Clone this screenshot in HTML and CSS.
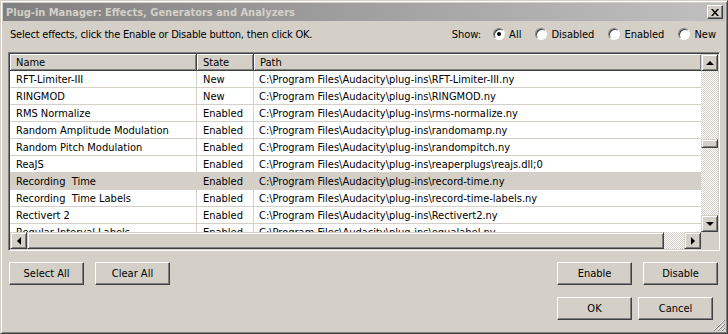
FILE: index.html
```html
<!DOCTYPE html>
<html lang="en">
  <head>
    <meta charset="UTF-8" />
    <title>Plug-in Manager</title>
    <link rel="stylesheet" href="styles.css">
  </head>
  <body>
    <div class="window">
      <div class="titlebar">
        <span class="title">Plug-in Manager: Effects, Generators and Analyzers</span>
        <div class="close">
          <svg width="8" height="7" viewBox="0 0 8 7"><path d="M0 0h2l2 2.5 2-2.5h2l-3 3.5 3 3.5h-2l-2-2.5-2 2.5h-2l3-3.5z" fill="#000"/></svg>
        </div>
      </div>

      <div class="content">
        <div class="topline">
          <span class="hint">Select effects, click the Enable or Disable button, then click OK.</span>
          <div class="show">
            <span class="show-label">Show:</span>
            <span class="opt"><span class="radio on"></span>All</span>
            <span class="opt"><span class="radio"></span>Disabled</span>
            <span class="opt"><span class="radio"></span>Enabled</span>
            <span class="opt"><span class="radio"></span>New</span>
          </div>
        </div>

        <div class="listbox">
          <div class="list">
            <div class="header">
              <div class="hcell name">Name</div>
              <div class="hcell state">State</div>
              <div class="hcell path">Path</div>
            </div>
            <div class="row"><div class="cell name">RFT-Limiter-III</div><div class="cell state">New</div><div class="cell path">C:\Program Files\Audacity\plug-ins\RFT-Limiter-III.ny</div></div>
            <div class="row"><div class="cell name">RINGMOD</div><div class="cell state">New</div><div class="cell path">C:\Program Files\Audacity\plug-ins\RINGMOD.ny</div></div>
            <div class="row"><div class="cell name">RMS Normalize</div><div class="cell state">Enabled</div><div class="cell path">C:\Program Files\Audacity\plug-ins\rms-normalize.ny</div></div>
            <div class="row"><div class="cell name">Random Amplitude Modulation</div><div class="cell state">Enabled</div><div class="cell path">C:\Program Files\Audacity\plug-ins\randomamp.ny</div></div>
            <div class="row"><div class="cell name">Random Pitch Modulation</div><div class="cell state">Enabled</div><div class="cell path">C:\Program Files\Audacity\plug-ins\randompitch.ny</div></div>
            <div class="row"><div class="cell name">ReaJS</div><div class="cell state">Enabled</div><div class="cell path">C:\Program Files\Audacity\plug-ins\reaperplugs\reajs.dll;0</div></div>
            <div class="row selected"><div class="cell name">Recording  Time</div><div class="cell state">Enabled</div><div class="cell path">C:\Program Files\Audacity\plug-ins\record-time.ny</div></div>
            <div class="row"><div class="cell name">Recording  Time Labels</div><div class="cell state">Enabled</div><div class="cell path">C:\Program Files\Audacity\plug-ins\record-time-labels.ny</div></div>
            <div class="row"><div class="cell name">Rectivert 2</div><div class="cell state">Enabled</div><div class="cell path">C:\Program Files\Audacity\plug-ins\Rectivert2.ny</div></div>
            <div class="row"><div class="cell name">Regular Interval Labels</div><div class="cell state">Enabled</div><div class="cell path">C:\Program Files\Audacity\plug-ins\equalabel.ny</div></div>
          </div>

          <!-- dikey kaydirma cubugu -->
          <div class="vscroll">
            <div class="sbtn"><span class="arrow up"></span></div>
            <div class="track">
              <div class="vthumb"></div>
            </div>
            <div class="sbtn"><span class="arrow down"></span></div>
          </div>

          <!-- yatay kaydirma cubugu -->
          <div class="hscroll">
            <div class="sbtn"><span class="arrow left"></span></div>
            <div class="hthumb"></div>
            <div class="track"></div>
            <div class="sbtn"><span class="arrow right"></span></div>
          </div>
          <div class="corner"></div>
        </div>

        <div class="btnrow first">
          <div class="group">
            <button class="btn">Select All</button>
            <button class="btn">Clear All</button>
          </div>
          <div class="group right1">
            <button class="btn">Enable</button>
            <button class="btn">Disable</button>
          </div>
        </div>
        <div class="btnrow second">
          <div class="group tight">
            <button class="btn">OK</button>
            <button class="btn">Cancel</button>
          </div>
        </div>
      </div>

      <svg class="grip" width="12" height="12" viewBox="0 0 12 12">
        <path d="M11 1L1 11M11 5L5 11M11 9L9 11" stroke="#fff" stroke-width="1"/>
        <path d="M12 1L1 12M12 5L5 12M12 9L9 12" stroke="#808080" stroke-width="1"/>
      </svg>
    </div>
  </body>
</html>
```

FILE: styles.css
```css
body {
  margin: 0;
  background-color: #d4d0c8;
  font-family: "DejaVu Sans Condensed", "Liberation Sans", sans-serif;
  font-size: 11px;
  color: #000000;
}

.window {
  position: relative;
  box-sizing: border-box;
  width: 728px;
  height: 334px;
  border: 1px solid;
  border-color: #d4d0c8 #404040 #404040 #d4d0c8;
  box-shadow: inset 1px 1px #ffffff, inset -1px -1px #808080;
  padding: 2px;
  background-color: #d4d0c8;
  display: flex;
  flex-direction: column;
}

/* Baslik cubugu (pasif pencere renkleri) */
.titlebar {
  height: 18px;
  display: flex;
  align-items: center;
  justify-content: space-between;
  padding: 0 2px 0 3px;
  background: linear-gradient(to right, #808080, #c0c0c0);
}
.title {
  color: #d4d0c8;
  font-weight: bold;
  font-size: 11px;
}
.close {
  box-sizing: border-box;
  width: 16px;
  height: 14px;
  display: flex;
  align-items: center;
  justify-content: center;
  background-color: #d4d0c8;
  border: 1px solid;
  border-color: #ffffff #404040 #404040 #ffffff;
  box-shadow: inset -1px -1px #808080;
}

.content {
  flex: 1;
  padding: 0 5px;
  display: flex;
  flex-direction: column;
}

.topline {
  height: 18px;
  margin-top: 4px;
  display: flex;
  align-items: center;
  justify-content: space-between;
  padding: 0 4px 0 2px;
}
.hint {
  letter-spacing: -0.2px;
}
.show {
  display: flex;
  align-items: center;
}
.show-label {
  margin-right: 12px;
}
.opt {
  display: flex;
  align-items: center;
  gap: 4px;
  margin-left: 14px;
}
.show-label + .opt {
  margin-left: 0;
}
.radio {
  position: relative;
  box-sizing: border-box;
  width: 12px;
  height: 12px;
  border-radius: 50%;
  background-color: #ffffff;
  border: 1px solid;
  border-color: #808080 #ffffff #ffffff #808080;
  box-shadow: inset 1px 1px #404040;
}
.radio.on::after {
  content: "";
  position: absolute;
  left: 3px;
  top: 3px;
  width: 4px;
  height: 4px;
  border-radius: 50%;
  background-color: #000000;
}

/* Liste kutusu */
.listbox {
  box-sizing: border-box;
  height: 199px;
  margin-top: 9px;
  border: 1px solid;
  border-color: #808080 #ffffff #ffffff #808080;
  box-shadow: inset 1px 1px #404040, inset -1px -1px #d4d0c8;
  padding: 1px;
  display: grid;
  grid-template-columns: 1fr 17px;
  grid-template-rows: 1fr 17px;
}
.list {
  background-color: #ffffff;
  overflow: hidden;
}
.header {
  display: flex;
  height: 17px;
}
.hcell {
  box-sizing: border-box;
  height: 17px;
  line-height: 16px;
  padding: 1px 0 0 6px;
  background-color: #d4d0c8;
  border-right: 1px solid #404040;
  border-bottom: 1px solid #404040;
  box-shadow: inset 1px 1px #ffffff, inset -1px -1px #808080;
  white-space: nowrap;
  overflow: hidden;
}
.name {
  width: 187px;
  flex: none;
}
.state {
  width: 57px;
  flex: none;
}
.path {
  flex: 1;
}
.header .path {
  border-right: none;
}
.row {
  display: flex;
  height: 17px;
}
.cell {
  box-sizing: border-box;
  height: 17px;
  line-height: 16px;
  padding: 1px 0 0 6px;
  border-right: 1px solid #d4d0c8;
  border-bottom: 1px solid #d4d0c8;
  white-space: pre;
  overflow: hidden;
}
.cell.path {
  border-right: none;
  padding-left: 5px;
}
.row.selected {
  background-color: #d4d0c8;
}

/* Kaydirma cubuklari */
.vscroll {
  display: flex;
  flex-direction: column;
}
.hscroll {
  display: flex;
}
.track {
  flex: 1;
  background: repeating-conic-gradient(#ffffff 0 25%, #d4d0c8 0 50%) 0 0 / 2px 2px;
}
.vscroll .track {
  padding-top: 68px;
}
.sbtn,
.vthumb,
.hthumb {
  box-sizing: border-box;
  background-color: #d4d0c8;
  border: 1px solid;
  border-color: #d4d0c8 #404040 #404040 #d4d0c8;
  box-shadow: inset 1px 1px #ffffff, inset -1px -1px #808080;
}
.sbtn {
  width: 17px;
  height: 17px;
  flex: none;
  display: flex;
  align-items: center;
  justify-content: center;
}
.vthumb {
  height: 9px;
}
.hthumb {
  width: 637px;
  flex: none;
}
.corner {
  background-color: #d4d0c8;
}
.arrow {
  width: 0;
  height: 0;
  border: 4px solid transparent;
}
.arrow.up {
  border-bottom-color: #000000;
  border-top-width: 0;
}
.arrow.down {
  border-top-color: #000000;
  border-bottom-width: 0;
}
.arrow.left {
  border-right-color: #000000;
  border-left-width: 0;
}
.arrow.right {
  border-left-color: #000000;
  border-right-width: 0;
}

/* Butonlar */
.btnrow {
  display: flex;
  justify-content: space-between;
  margin-top: 11px;
  padding: 0 2px 0 1px;
}
.btnrow.second {
  justify-content: flex-end;
  margin-top: 12px;
  padding-right: 7px;
}
.group {
  display: flex;
  gap: 11px;
}
.group.tight {
  gap: 6px;
}
.btn {
  box-sizing: border-box;
  width: 75px;
  height: 23px;
  padding: 0;
  font-family: inherit;
  font-size: 11px;
  color: #000000;
  background-color: #d4d0c8;
  border: 1px solid;
  border-color: #ffffff #404040 #404040 #ffffff;
  box-shadow: inset -1px -1px #808080;
}

.grip {
  position: absolute;
  right: 2px;
  bottom: 2px;
}
```
